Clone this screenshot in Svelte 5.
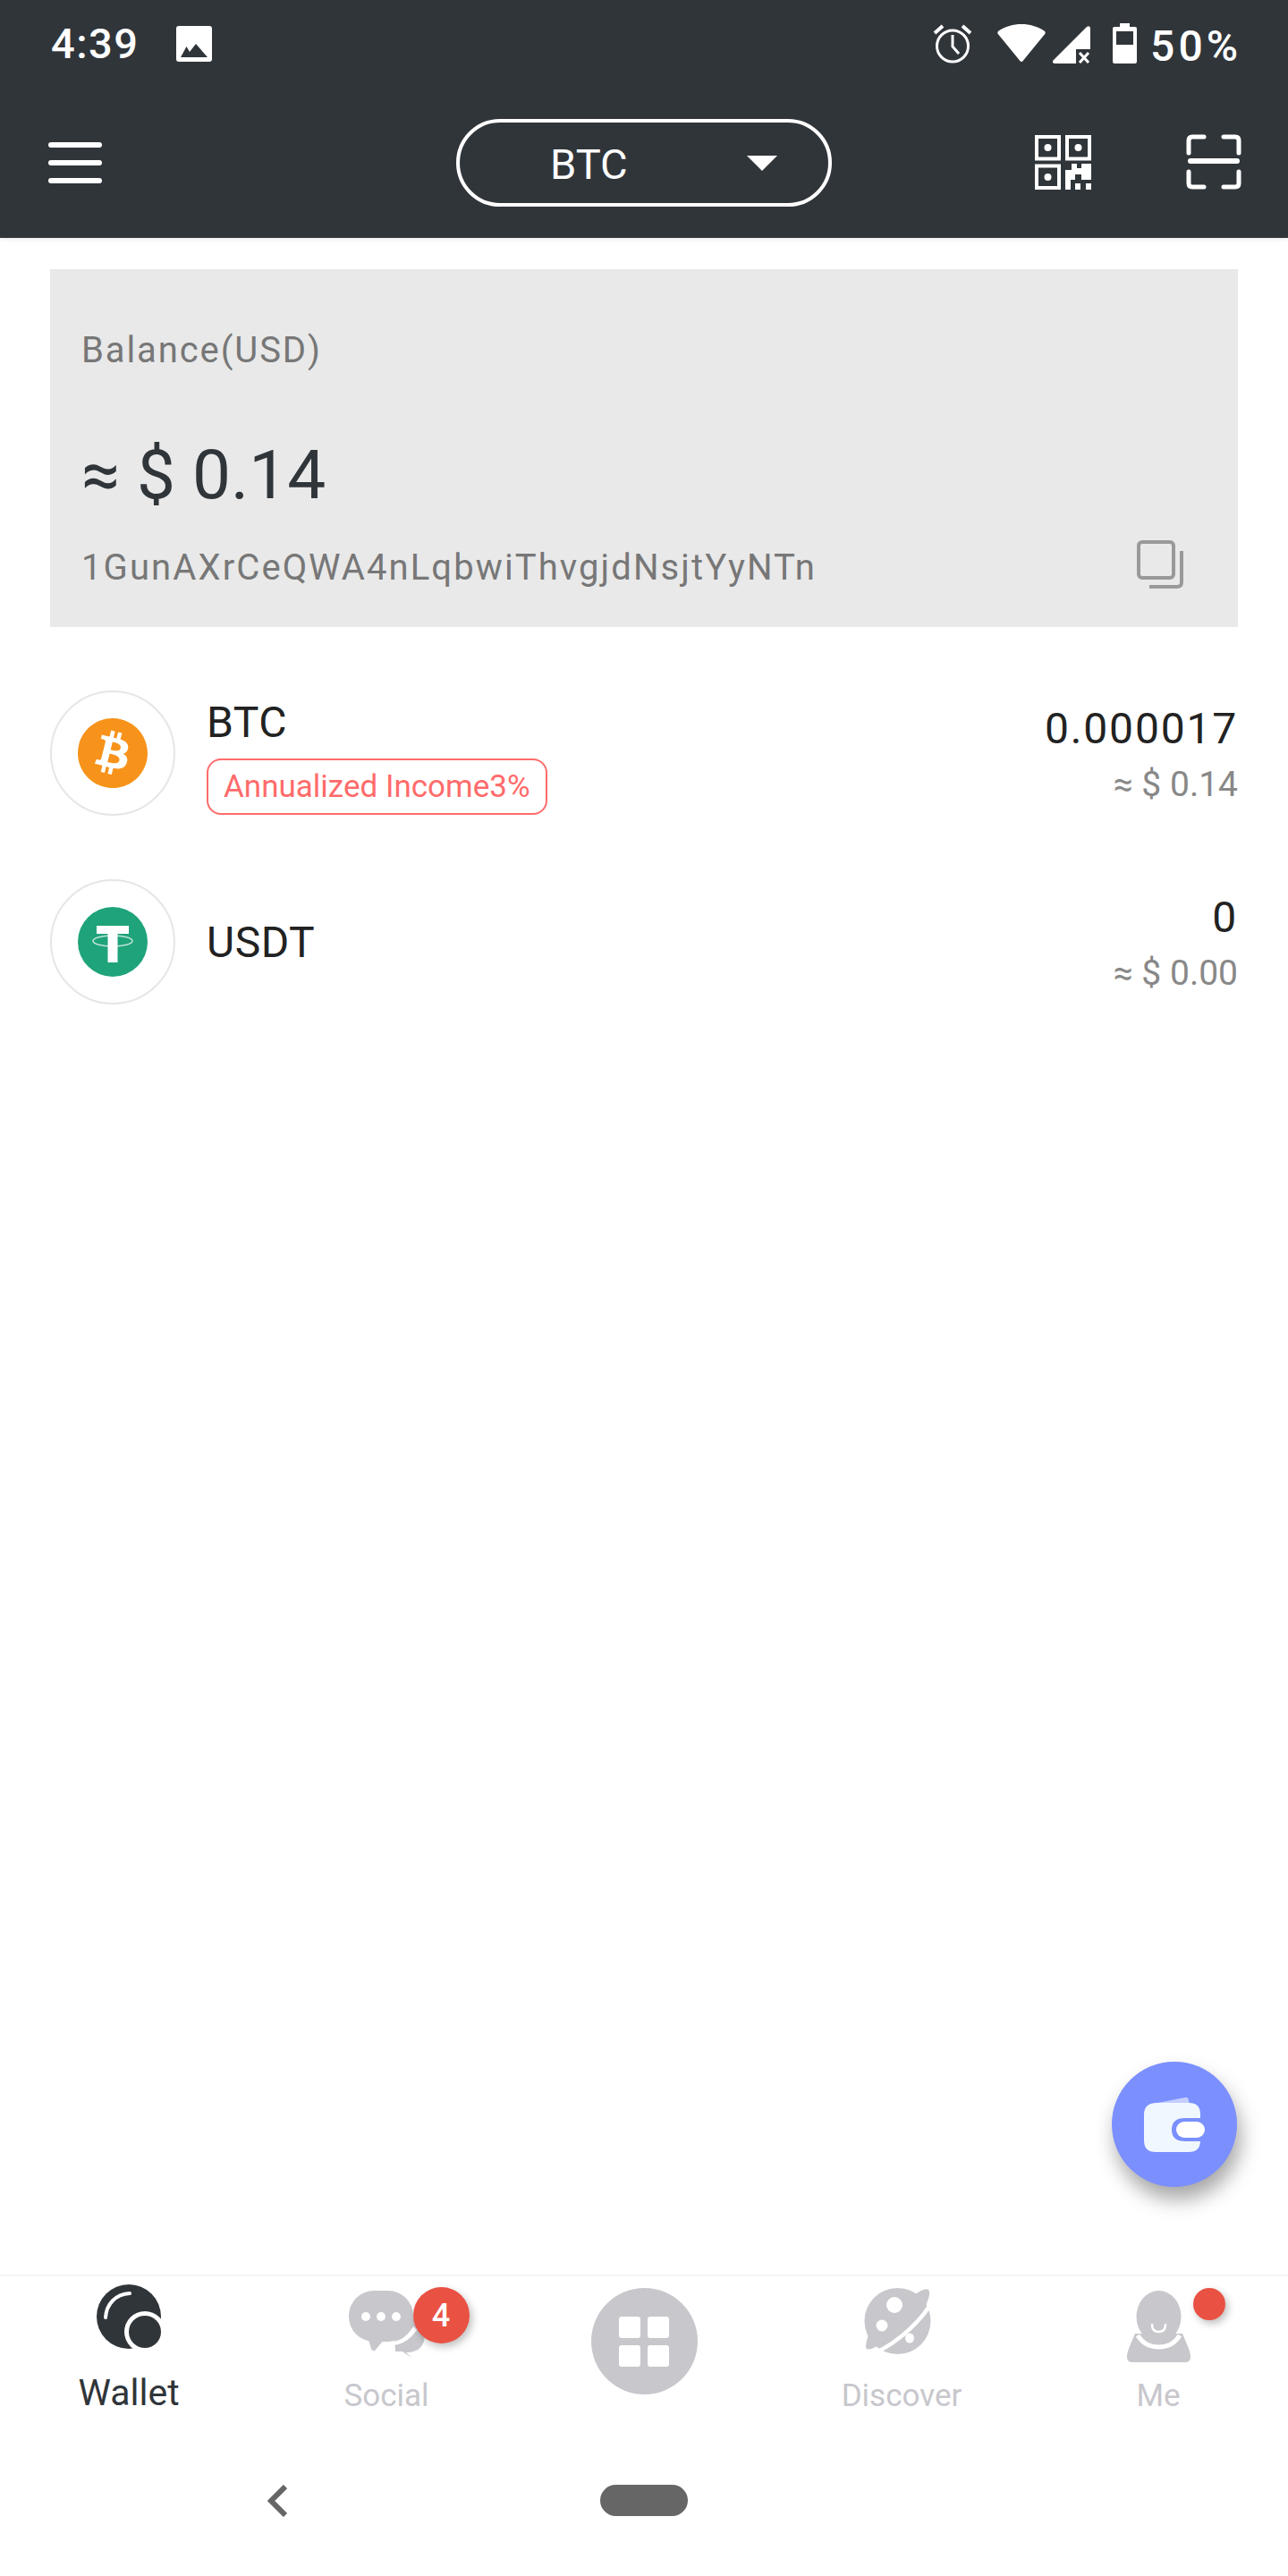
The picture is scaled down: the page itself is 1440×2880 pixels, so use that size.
<script>
  const tabs = [
    { key: "wallet", label: "Wallet", active: true },
    { key: "social", label: "Social" },
    { key: "apps", label: "" },
    { key: "discover", label: "Discover" },
    { key: "me", label: "Me" }
  ];
</script>

<div class="page">
  <header class="topbar">
    <div class="status">
      <div class="status-left">
        <span class="time">4:39</span>
        <svg width="40" height="40" viewBox="0 0 40 40">
          <rect width="40" height="40" rx="3" fill="#fff" />
          <path d="M5 35 L11.5 23 L15 29 L22 20 L35 35 Z" fill="#30353a" />
        </svg>
      </div>
      <div class="status-right">
        <svg class="alarm" width="44" height="44" viewBox="0 0 44 44" fill="none" stroke="#fff">
          <circle cx="22" cy="24.500" r="17.500" stroke-width="3" />
          <path d="M22 12 V25 L29 33" stroke-width="3" />
          <path d="M2 10 L11 2 M42 10 L33 2" stroke-width="4" />
        </svg>
        <svg class="wifi" width="54" height="42" viewBox="0 0 54 42">
          <path d="M27 42 Q25.500 42 24.500 40 L0.800 11 Q-0.500 9 1.500 7.500 C 16 -2.500 38 -2.500 52.500 7.500 Q54.500 9 53.200 11 L29.500 40 Q28.500 42 27 42 Z" fill="#fff" />
        </svg>
        <svg class="signal" width="42" height="42" viewBox="0 0 42 42">
          <path d="M0 39 L38 1 Q42 -1 42 3 V26 H26 V42 H3 Q-1 42 0 39 Z" fill="#fff" />
          <path d="M30 30 L40 41 M40 30 L30 41" stroke="#fff" stroke-width="3" />
        </svg>
        <svg class="battery" width="27" height="45" viewBox="0 0 27 45">
          <path d="M8 0 H19 V4 H25 Q27 4 27 6 V43 Q27 45 25 45 H2 Q0 45 0 43 V6 Q0 4 2 4 H8 Z" fill="#fff" />
          <rect x="4" y="9" width="19" height="15" fill="#30353a" />
        </svg>
        <span class="pct">50%</span>
      </div>
    </div>

    <div class="toolbar">
      <div class="menu">
        <span></span><span></span><span></span>
      </div>
      <div class="coin-select">
        <span class="coin-name">BTC</span>
        <i class="caret"></i>
      </div>
      <div class="tools">
        <svg width="63" height="61" viewBox="0 0 63 61" fill="none">
          <g stroke="#fff" stroke-width="4">
            <rect x="2" y="2" width="25" height="24.500" />
            <rect x="36" y="2" width="25" height="24.500" />
            <rect x="2" y="34.500" width="25" height="24.500" />
          </g>
          <g fill="#fff">
            <circle cx="14.500" cy="14" r="4" />
            <circle cx="48.500" cy="14" r="4" />
            <circle cx="14.500" cy="47" r="4" />
            <path d="M34 39 H41 V32 H47 V37 H52 V32 H63 V50 H52 V44 H45 V50 H40 V61 H34 Z" />
            <rect x="45" y="54" width="6" height="7" />
            <rect x="57" y="54" width="6" height="7" />
          </g>
        </svg>
        <svg width="62" height="62" viewBox="0 0 62 62" fill="none" stroke="#fff" stroke-width="5" stroke-linecap="round" stroke-linejoin="round">
          <path d="M20 3 H7 Q3 3 3 7 V21" />
          <path d="M42 3 H55 Q59 3 59 7 V21" />
          <path d="M3 42 V55 Q3 59 7 59 H20" />
          <path d="M59 42 V55 Q59 59 55 59 H42" />
          <path d="M5 30 H57" stroke-width="6" />
        </svg>
      </div>
    </div>
  </header>

  <main class="content">
    <section class="balance">
      <div class="balance-label">Balance(USD)</div>
      <div class="balance-value">≈ $ 0.14</div>
      <div class="address-row">
        <span class="address">1GunAXrCeQWA4nLqbwiThvgjdNsjtYyNTn</span>
        <svg class="copy" width="52" height="54" viewBox="0 0 52 54" fill="none" stroke="#999" stroke-width="4">
          <rect x="2" y="2" width="39" height="40" rx="4" />
          <path d="M50 12 V47 Q50 52 45 52 H14" />
        </svg>
      </div>
    </section>

    <div class="coin-row">
      <div class="coin-icon">
        <svg width="78" height="78" viewBox="0 0 24 24">
          <path fill="#f7931a" d="M23.638 14.904c-1.602 6.43-8.113 10.34-14.542 8.736C2.67 22.05-1.244 15.525.362 9.105 1.962 2.67 8.475-1.243 14.9.358c6.43 1.605 10.342 8.115 8.738 14.548v-.002zm-6.35-4.613c.24-1.59-.974-2.45-2.64-3.03l.54-2.153-1.315-.33-.525 2.107c-.345-.087-.705-.167-1.064-.25l.526-2.127-1.32-.33-.54 2.165c-.285-.067-.565-.132-.84-.2l-1.815-.45-.35 1.407s.975.225.955.236c.535.136.63.486.615.766l-1.477 5.92c-.075.166-.24.406-.614.314.015.02-.96-.24-.96-.24l-.66 1.51 1.71.426.93.242-.54 2.19 1.32.327.54-2.17c.36.1.705.19 1.05.273l-.51 2.154 1.32.33.545-2.19c2.24.427 3.93.257 4.64-1.774.57-1.637-.03-2.58-1.217-3.196.854-.193 1.5-.76 1.68-1.93h.01zm-3.01 4.22c-.404 1.64-3.157.75-4.05.53l.72-2.9c.896.23 3.757.67 3.33 2.37zm.41-4.24c-.37 1.49-2.662.735-3.405.55l.654-2.64c.744.18 3.137.524 2.75 2.084v.006z" />
        </svg>
      </div>
      <div class="coin-main with-tag">
        <div class="coin-symbol">BTC</div>
        <div class="income">Annualized Income3%</div>
      </div>
      <div class="coin-amounts">
        <div class="amount">0.000017</div>
        <div class="usd">≈ $ 0.14</div>
      </div>
    </div>

    <div class="coin-row">
      <div class="coin-icon">
        <svg width="78" height="78" viewBox="0 0 78 78">
          <circle cx="39" cy="39" r="39" fill="#1fa37a" />
          <rect x="21" y="21" width="36" height="9" fill="#fff" />
          <rect x="33.500" y="21" width="11" height="41" fill="#fff" />
          <ellipse cx="39" cy="38" rx="22" ry="6" fill="none" stroke="#fff" stroke-width="1.500" opacity=".7" />
        </svg>
      </div>
      <div class="coin-main">
        <div class="coin-symbol">USDT</div>
      </div>
      <div class="coin-amounts">
        <div class="amount">0</div>
        <div class="usd">≈ $ 0.00</div>
      </div>
    </div>

    <button class="fab" aria-label="wallet">
      <svg width="68" height="62" viewBox="0 0 68 62">
        <path d="M10 8 L46 1 Q49 0 50 4 L51 10 Z" fill="#c3cdff" />
        <path d="M15 7 H50 Q63 7 63 20 V24 H46 Q31 24 31 37 Q31 50 46 50 H63 V49 Q63 62 50 62 H13 Q0 62 0 49 V20 Q0 7 15 7 Z" fill="#f1f7ff" />
        <rect x="36" y="28" width="32" height="18" rx="9" fill="#fff" />
      </svg>
    </button>
  </main>

  <nav class="tabbar">
    {#each tabs as tab}
      <div class="tab {tab.key}" class:active={tab.active}>
        {#if tab.key === "wallet"}
          <svg class="tab-icon" width="72" height="72" viewBox="0 0 72 72">
            <circle cx="36" cy="36" r="36" fill="#30353a" />
            <circle cx="54" cy="53" r="23" fill="#fff" />
            <circle cx="54" cy="53" r="18" fill="#30353a" />
            <path d="M37 10 C 21 11 11 22 10 37" fill="none" stroke="#fff" stroke-width="4" stroke-linecap="round" />
          </svg>
        {:else if tab.key === "social"}
          <div class="icon-wrap">
            <svg class="tab-icon" width="85" height="75" viewBox="0 0 85 75">
              <path d="M50 30 H68 Q85 30 85 48 Q85 68 66 69 H64 L70 75 L60 68 H52 Z" fill="#c7c7cc" />
              <rect x="0" y="0" width="72" height="57" rx="28" fill="#c7c7cc" />
              <path d="M40 57 Q60 60 72 40 L76 44 Q62 64 40 61 Z" fill="#fff" />
              <path d="M22 55 L25 65 Q27 69 30 66 L39 55 Z" fill="#c7c7cc" />
              <g fill="#fff">
                <circle cx="19" cy="29" r="5" />
                <circle cx="36" cy="29" r="5" />
                <circle cx="53" cy="29" r="5" />
              </g>
            </svg>
            <span class="count">4</span>
          </div>
        {:else if tab.key === "apps"}
          <div class="apps-circle">
            <span></span><span></span><span></span><span></span>
          </div>
        {:else if tab.key === "discover"}
          <svg class="tab-icon planet" width="75" height="74" viewBox="0 0 75 74">
            <circle cx="37.500" cy="37" r="37" fill="#c7c7cc" />
            <path d="M56 8 Q68 -1 72 2 Q76 6 66 26 Z" fill="#c7c7cc" />
            <path d="M7 46 Q0 66 3 68 Q7 71 26 58 Z" fill="#c7c7cc" />
            <path d="M77 13 C 66 36 36 62 13 72" fill="none" stroke="#fff" stroke-width="4.500" />
            <g fill="#fff">
              <ellipse cx="34" cy="19" rx="9" ry="9" />
              <ellipse cx="20" cy="42" rx="6.500" ry="6.500" />
              <ellipse cx="51" cy="56" rx="5" ry="5.500" />
            </g>
          </svg>
        {:else}
          <div class="icon-wrap">
            <svg class="tab-icon" width="71" height="80" viewBox="0 0 71 80">
              <path d="M9 48 C 4 60 0 68 0 74 Q0 80 6 80 H65 Q71 80 71 74 C71 68 67 60 62 48 Z" fill="#c7c7cc" />
              <ellipse cx="35.500" cy="29" rx="25" ry="29" fill="#c7c7cc" />
              <path d="M12 50 C 18 60 27 63 35.500 63 C 44 63 53 60 59 50" fill="none" stroke="#fff" stroke-width="5" />
              <path d="M28 38 Q28 46 35.500 46 Q43 46 43 38" fill="none" stroke="#fff" stroke-width="2.500" stroke-linecap="round" />
            </svg>
            <span class="dot"></span>
          </div>
        {/if}
        {#if tab.label}
          <span class="tab-label">{tab.label}</span>
        {/if}
      </div>
    {/each}
  </nav>

  <div class="navbar">
    <svg width="22" height="36" viewBox="0 0 22 36" fill="none" stroke="#666" stroke-width="6">
      <path d="M20 2 L4 18 L20 34" />
    </svg>
    <span class="home"></span>
    <span class="spacer"></span>
  </div>
</div>

<style>
  :global(body) {
    margin: 0;
    background: #fff;
  }

  .page {
    width: 1440px;
    height: 2880px;
    display: flex;
    flex-direction: column;
    font-family: Roboto, "Liberation Sans", sans-serif;
    color: #222;
    overflow: hidden;
  }

  .topbar {
    height: 266px;
    flex: none;
    background: #30353a;
    box-shadow: 0 2px 5px rgba(0, 0, 0, 0.08);
    z-index: 1;
  }

  .status {
    height: 98px;
    padding: 26px 56px 0 57px;
    box-sizing: border-box;
    display: flex;
    justify-content: space-between;
    align-items: flex-start;
  }

  .status-left {
    display: flex;
    align-items: center;
    gap: 41px;
    height: 46px;
    color: #fff;
  }

  .time {
    font-size: 47px;
    font-weight: 500;
    line-height: 46px;
    letter-spacing: 1.5px;
  }

  .status-right {
    display: flex;
    align-items: flex-start;
    color: #fff;
  }

  .alarm {
    margin-top: 1px;
    margin-right: 28px;
  }

  .wifi {
    margin-top: 1px;
    margin-right: 8px;
  }

  .signal {
    margin-top: 3px;
    margin-right: 25px;
  }

  .pct {
    font-size: 48px;
    font-weight: 500;
    line-height: 46px;
    letter-spacing: 4px;
    margin-left: 15px;
    margin-right: -4px;
    margin-top: 3px;
  }

  .toolbar {
    display: flex;
    align-items: center;
    height: 98px;
    margin-top: 35px;
    padding: 0 52px 0 54px;
    position: relative;
  }

  .menu {
    display: flex;
    flex-direction: column;
    gap: 14px;
    width: 60px;
  }

  .menu span {
    height: 6px;
    border-radius: 3px;
    background: #fff;
  }

  .coin-select {
    width: 420px;
    height: 98px;
    box-sizing: border-box;
    border: 4px solid #fff;
    border-radius: 49px;
    margin-left: 396px;
    display: flex;
    align-items: center;
    color: #fff;
  }

  .coin-name {
    font-size: 47px;
    margin-left: 101px;
    padding-top: 2px;
  }

  .caret {
    width: 0;
    height: 0;
    border-left: 17px solid transparent;
    border-right: 17px solid transparent;
    border-top: 17px solid #fff;
    margin-left: 133px;
  }

  .tools {
    display: flex;
    gap: 106px;
    margin-left: auto;
    align-items: center;
    margin-top: -2px;
  }

  .content {
    flex: 1;
    position: relative;
    padding: 35px 56px 0;
  }

  .balance {
    height: 400px;
    background: #e9e9e9;
    padding: 0 27px 0 35px;
    box-sizing: border-box;
    display: flex;
    flex-direction: column;
  }

  .balance-label {
    font-size: 40px;
    line-height: 48px;
    color: #777;
    margin-top: 67px;
    letter-spacing: 1.9px;
  }

  .balance-value {
    font-size: 76.500px;
    line-height: 90px;
    color: #30353a;
    margin-top: 70px;
  }

  .address-row {
    display: flex;
    justify-content: space-between;
    align-items: center;
    margin-top: 34px;
  }

  .address {
    font-size: 40px;
    color: #777;
    letter-spacing: 2.1px;
  }

  .copy {
    margin-right: 34px;
    margin-top: -6px;
  }

  .coin-row {
    display: flex;
    align-items: center;
    height: 140px;
    margin-top: 71px;
  }

  .coin-icon {
    width: 140px;
    height: 140px;
    box-sizing: border-box;
    border: 2px solid #e6e6e6;
    border-radius: 50%;
    display: flex;
    align-items: center;
    justify-content: center;
    flex: none;
  }

  .coin-main {
    margin-left: 35px;
    flex: 1;
    padding-top: 2px;
  }

  .with-tag {
    padding-top: 7px;
  }

  .coin-symbol {
    font-size: 48px;
    line-height: 56px;
    letter-spacing: 0.5px;
  }

  .income {
    display: inline-block;
    margin-top: 12px;
    height: 63px;
    box-sizing: border-box;
    line-height: 59px;
    padding: 0 17px;
    border: 2px solid #ff6b6b;
    border-radius: 16px;
    font-size: 35px;
    color: #ff6b6b;
  }

  .coin-amounts {
    text-align: right;
    padding-top: 4px;
  }

  .amount {
    font-size: 48px;
    line-height: 54px;
    letter-spacing: 1.8px;
  }

  .usd {
    font-size: 39px;
    line-height: 46px;
    color: #888;
    margin-top: 12px;
  }

  .fab {
    position: absolute;
    right: 57px;
    bottom: 98px;
    width: 140px;
    height: 140px;
    padding: 0;
    border: none;
    border-radius: 50%;
    background: #7b8fff;
    box-shadow: 4px 14px 22px rgba(0, 0, 0, 0.35);
    display: flex;
    align-items: center;
    justify-content: center;
  }

  .tabbar {
    height: 235px;
    flex: none;
    border-top: 2px solid #f5f5f5;
    display: grid;
    grid-template-columns: repeat(5, 288px);
    box-sizing: border-box;
  }

  .tab {
    display: flex;
    flex-direction: column;
    align-items: center;
    color: #c7c7cc;
    font-size: 35px;
    position: relative;
  }

  .tab-icon {
    display: block;
  }

  .planet {
    margin-right: 10px;
  }

  .tab-label {
    position: absolute;
    top: 114px;
    line-height: 40px;
  }

  .active .tab-label {
    color: #30353a;
    font-size: 41px;
    top: 106px;
    line-height: 48px;
  }

  .wallet {
    padding-top: 9px;
  }

  .social {
    padding-top: 16px;
  }

  .discover {
    padding-top: 13px;
  }

  .me {
    padding-top: 16px;
    padding-right: 2px;
  }

  .apps {
    padding-top: 13px;
  }

  .icon-wrap {
    position: relative;
  }

  .count {
    position: absolute;
    left: 72px;
    top: -4px;
    width: 63px;
    height: 63px;
    border-radius: 50%;
    background: #e95143;
    color: #fff;
    font-size: 36px;
    font-weight: 500;
    display: flex;
    align-items: center;
    justify-content: center;
    box-shadow: 3px 4px 8px rgba(0, 0, 0, 0.25);
  }

  .dot {
    position: absolute;
    left: 74px;
    top: -3px;
    width: 36px;
    height: 36px;
    border-radius: 50%;
    background: #e95143;
    box-shadow: 3px 4px 8px rgba(0, 0, 0, 0.25);
  }

  .apps-circle {
    width: 119px;
    height: 119px;
    border-radius: 50%;
    background: #c7c7cc;
    display: grid;
    grid-template-columns: 24px 24px;
    grid-template-rows: 24px 24px;
    gap: 8px;
    align-content: center;
    justify-content: center;
  }

  .apps-circle span {
    background: #fff;
    border-radius: 3px;
  }

  .navbar {
    height: 102px;
    flex: none;
    display: flex;
    align-items: flex-start;
    padding: 0 0 0 299px;
    box-sizing: border-box;
  }

  .home {
    width: 98px;
    height: 35px;
    border-radius: 18px;
    background: #666;
    margin-left: 350px;
  }

  .spacer {
    flex: 1;
  }
</style>
